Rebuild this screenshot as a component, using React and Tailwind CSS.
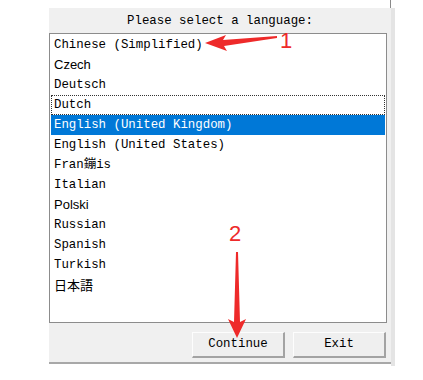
const languages = [
  { label: 'Chinese (Simplified)' },
  { label: 'Czech', sans: true },
  { label: 'Deutsch' },
  { label: 'Dutch', focus: true },
  { label: 'English (United Kingdom)', selected: true },
  { label: 'English (United States)' },
  { label: 'Fran鏰is' },
  { label: 'Italian' },
  { label: 'Polski', sans: true },
  { label: 'Russian' },
  { label: 'Spanish' },
  { label: 'Turkish' },
  { label: '日本語', cjk: true },
];

const mono = "font-['Liberation_Mono','Noto_Sans_CJK_SC',monospace] text-[12.4px]";

function LangItem({ lang }) {
  let font = mono;
  if (lang.sans) font = "font-['Liberation_Sans',sans-serif] text-[13px]";
  if (lang.cjk) font = "font-['Noto_Sans_CJK_JP',sans-serif] text-[13px]";
  return (
    <div
      className={`h-[20px] leading-[18px] pl-[2px] border border-dotted ${font} ${
        lang.selected ? 'bg-[#0078d7] text-white border-[#0078d7]' : 'text-black'
      } ${lang.focus ? 'border-[#333]' : lang.selected ? '' : 'border-transparent'}`}
    >
      {lang.label}
    </div>
  );
}

function Win98Button({ children }) {
  return (
    <button className={`w-[93px] h-[26px] bg-[#efefef] border-t border-l border-t-[#fdfdfd] border-l-[#fdfdfd] border-b-2 border-r-2 border-b-[#a3a3a3] border-r-[#a3a3a3] text-black ${mono} flex items-center justify-center`}>
      {children}
    </button>
  );
}

export default function App() {
  return (
    <div className="w-[423px] h-[380px] bg-white relative overflow-hidden">
      {/* window edge above the dialog */}
      <div className="absolute left-[390px] top-0 w-[1px] h-[8px] bg-[#8a8a8a]" />

      <div className="ml-[49px] mt-[8px] w-[346px] flex">
        <div className="w-[342px] h-[356px] bg-[#f0f0f0] border-b-2 border-[#a8a8a8] flex flex-col">
          <div className={`h-[25px] flex items-center justify-center pt-[1px] text-black ${mono}`}>
            Please select a language:
          </div>

          <div className="w-[338px] h-[290px] bg-white border border-[#8c8c8c] p-[1px] pr-[1px]">
            {languages.map((lang) => (
              <LangItem key={lang.label} lang={lang} />
            ))}
          </div>

          <div className="flex justify-end gap-[8px] pr-[5px] pt-[9px]">
            <Win98Button>Continue</Win98Button>
            <Win98Button>Exit</Win98Button>
          </div>
        </div>
        <div className="w-[4px] h-[358px] bg-[#e4e4e4]" />
      </div>

      {/* red annotation arrows */}
      <svg className="absolute left-0 top-0 pointer-events-none" width="423" height="380" viewBox="0 0 423 380">
        <polygon points="205,43 226,35 223,40 277,36 277,38 224,46 227,51" fill="#ee2a2a" />
        <polygon points="236,252 238,252 240,322 246,319 237,338 228,319 234,322" fill="#ee2a2a" />
      </svg>
      <div className="absolute left-[280px] top-[29px] text-[22px] leading-[24px] text-[#ee2a2a] font-['Liberation_Sans',sans-serif]">
        1
      </div>
      <div className="absolute left-[229px] top-[222px] text-[22px] leading-[24px] text-[#ee2a2a] font-['Liberation_Sans',sans-serif]">
        2
      </div>
    </div>
  );
}
